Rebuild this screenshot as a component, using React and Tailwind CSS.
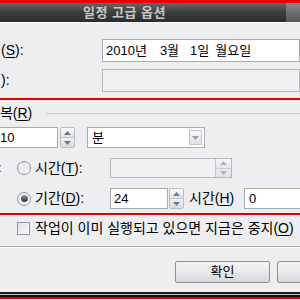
import React from "react";

const font = { fontFamily: '"Liberation Sans", "Noto Sans CJK KR", sans-serif' };

function Spin({ h = "h-[21px]", disabled = false }) {
  const arrow = disabled ? "#b0b4b8" : "#6b7b8c";
  return (
    <div className={`w-[15px] ${h} flex flex-col border border-[#b9bcc0] rounded-[2px] overflow-hidden`}>
      <div className="flex-1 flex items-center justify-center bg-gradient-to-b from-[#fafafa] to-[#e2e3e6] border-b border-[#c3c6ca]">
        <svg width="7" height="4" viewBox="0 0 7 4"><path d="M0 4 L3.5 0 L7 4 Z" fill={arrow} /></svg>
      </div>
      <div className="flex-1 flex items-center justify-center bg-gradient-to-b from-[#f0f0f2] to-[#dadbde]">
        <svg width="7" height="4" viewBox="0 0 7 4"><path d="M0 0 L3.5 4 L7 0 Z" fill={arrow} /></svg>
      </div>
    </div>
  );
}

function U({ children }) {
  return <span className="underline underline-offset-2">{children}</span>;
}

function Radio({ checked }) {
  return (
    <div className="w-[14px] h-[14px] rounded-full border border-[#8e959c] bg-gradient-to-br from-[#e6e8eb] to-[#fdfdfd] flex items-center justify-center shrink-0">
      {checked && <div className="w-[7px] h-[7px] rounded-full bg-gradient-to-b from-[#8d9aa8] to-[#243447]" />}
    </div>
  );
}

export default function App() {
  return (
    <div className="w-[300px] h-[300px] overflow-hidden bg-[#eeeef1] flex flex-col text-[13px] text-black" style={font}>
      <div className="h-[3px] bg-[#e40000] shrink-0" />
      <div className="h-[19px] shrink-0 bg-gradient-to-b from-[#666] via-[#3d3d3d] to-[#2c2c2c] flex items-center">
        <span className="ml-[83px] text-[13px] text-[#c9c9c9] tracking-[0.5px] font-bold">일정 고급 옵션</span>
        <div className="ml-auto w-[14px] h-full bg-gradient-to-b from-[#8a8a8a] to-[#555]" />
      </div>
      <div className="h-[1px] bg-[#fafafa] shrink-0" />

      {/* 시작 */}
      <div className="flex items-center mt-[16px] h-[23px] shrink-0">
        <div className="w-[102px] shrink-0 text-[14px] pl-[1px]">(<U>S</U>):</div>
        <div className="flex-1 h-full bg-white border border-[#a9acb2] flex items-center pl-[3px] text-[13px]">
          <span>2010년</span>
          <span className="ml-[13px]">3월</span>
          <span className="ml-[11px]">1일</span>
          <span className="ml-[6px]">월요일</span>
        </div>
      </div>

      {/* 끝 */}
      <div className="flex items-center mt-[7px] h-[23px] shrink-0">
        <div className="w-[102px] shrink-0 text-[14px] pl-[1px]">):</div>
        <div className="flex-1 h-full bg-[#f0f0f2] border border-[#b5b7bb]" />
      </div>

      <div className="h-[2px] bg-[#e40000] mt-[6px] shrink-0" />

      {/* 반복 */}
      <div className="flex items-center mt-[5px] h-[17px] shrink-0">
        <span className="-ml-[13px] text-[14px] whitespace-nowrap">반복(<U>R</U>)</span>
        <div className="flex-1 h-[1px] bg-[#c9cbcf] ml-[14px]" />
      </div>

      <div className="flex items-center mt-[5px] h-[21px] shrink-0">
        <div className="-ml-[4px] w-[62px] shrink-0 h-full bg-white border border-[#a9acb2] flex items-center pl-[3px]">10</div>
        <div className="ml-[2px]"><Spin /></div>
        <div className="ml-[12px] w-[118px] shrink-0 h-full bg-white border border-[#a9acb2] flex items-center pl-[4px]">
          <span>분</span>
          <div className="ml-auto mr-[2px] w-[13px] h-[15px] border border-[#c2c4c8] bg-gradient-to-b from-[#f7f7f7] to-[#e0e1e4] flex items-center justify-center">
            <svg width="7" height="4" viewBox="0 0 7 4"><path d="M0 0 L3.5 4 L7 0 Z" fill="#9aa0a6" /></svg>
          </div>
        </div>
      </div>

      {/* 시간 */}
      <div className="flex items-center mt-[10px] h-[20px] shrink-0">
        <span className="-ml-[2px] w-[19px] shrink-0 text-[13px]">:</span>
        <Radio />
        <span className="ml-[4px] w-[75px] shrink-0 text-[14px] whitespace-nowrap">시간(<U>T</U>):</span>
        <div className="w-[122px] shrink-0 h-full bg-[#f0f0f2] border border-[#b5b7bb] flex justify-end">
          <div className="w-[16px] h-full flex flex-col border-l border-[#c3c6ca]">
            <div className="flex-1 bg-gradient-to-b from-[#f6f6f7] to-[#e6e7ea] border-b border-[#c8cace] flex items-center justify-center">
              <svg width="7" height="4" viewBox="0 0 7 4"><path d="M0 4 L3.5 0 L7 4 Z" fill="#b0b4b8" /></svg>
            </div>
            <div className="flex-1 bg-gradient-to-b from-[#eeeef0] to-[#e0e1e4] flex items-center justify-center">
              <svg width="7" height="4" viewBox="0 0 7 4"><path d="M0 0 L3.5 4 L7 0 Z" fill="#b0b4b8" /></svg>
            </div>
          </div>
        </div>
      </div>

      {/* 기간 */}
      <div className="flex items-center mt-[10px] h-[21px] shrink-0">
        <span className="w-[17px] shrink-0" />
        <Radio checked />
        <span className="ml-[4px] w-[75px] shrink-0 text-[14px] whitespace-nowrap">기간(<U>D</U>):</span>
        <div className="w-[58px] shrink-0 h-full bg-white border border-[#a9acb2] flex items-center pl-[3px]">24</div>
        <div className="ml-[1px] shrink-0"><Spin /></div>
        <span className="ml-[5px] w-[55px] shrink-0 text-[14px] whitespace-nowrap">시간(<U>H</U>)</span>
        <div className="w-[60px] shrink-0 h-full bg-white border border-[#a9acb2] flex items-center pl-[4px]">0</div>
      </div>

      <div className="h-[2px] bg-[#e40000] mt-[4px] shrink-0" />

      {/* 체크박스 */}
      <div className="flex items-center mt-[5px] h-[17px] shrink-0">
        <div className="ml-[17px] w-[13px] h-[13px] border border-[#8e959c] bg-gradient-to-br from-[#dfe1e4] to-[#fbfbfb] shrink-0" />
        <span className="ml-[5px] whitespace-nowrap text-[14px]">작업이 이미 실행되고 있으면 지금은 중지(<U>O</U>)</span>
      </div>

      <div className="h-[1px] bg-[#a9abaf] mt-[9px] shrink-0" />
      <div className="h-[1px] bg-[#fbfbfb] shrink-0" />

      {/* 버튼 */}
      <div className="flex mt-[13px] h-[22px] shrink-0">
        <div className="ml-[175px] w-[95px] shrink-0 h-full border border-[#8d9096] rounded-[2px] bg-gradient-to-b from-[#f4f4f4] via-[#e9e9ea] to-[#d6d7da] flex items-center justify-center text-[13px]">확인</div>
        <div className="ml-[7px] w-[95px] shrink-0 h-full border border-[#8d9096] rounded-[2px] bg-gradient-to-b from-[#f4f4f4] via-[#e9e9ea] to-[#d6d7da]" />
      </div>

      <div className="flex-1" />
      <div className="h-[2px] bg-[#1c1c1c] shrink-0" />
      <div className="h-[1px] bg-[#bdbdbd] shrink-0" />
      <div className="h-[2px] bg-[#111] shrink-0" />
      <div className="h-[2px] bg-[#e40000] shrink-0" />
      <div className="h-[1px] bg-[#eeeef1] shrink-0" />
    </div>
  );
}
